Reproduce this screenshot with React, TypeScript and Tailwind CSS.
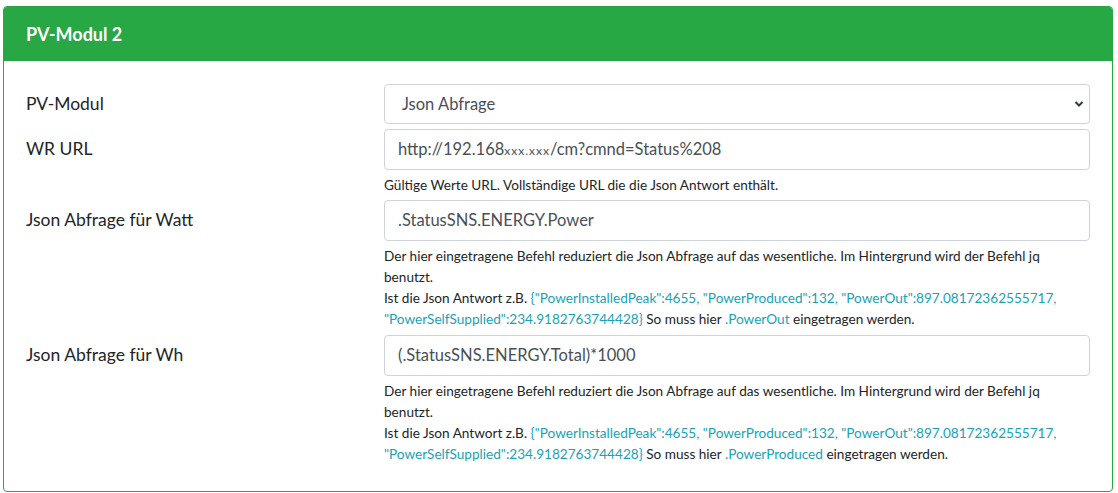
import React from 'react';

const INFO = 'text-[#17a2b8]';

const JsonHelp = ({ field }: { field: string }) => (
  <div className="mt-[5px] text-[13.6px] leading-[21px] text-[#212529]">
    Der hier eingetragene Befehl reduziert die Json Abfrage auf das wesentliche. Im Hintergrund wird der Befehl jq
    benutzt.
    <br />
    Ist die Json Antwort z.B.{' '}
    <span className={INFO}>
      {'{"PowerInstalledPeak":4655, "PowerProduced":132, "PowerOut":897.08172362555717, "PowerSelfSupplied":234.9182763744428}'}
    </span>{' '}
    So muss hier <span className={INFO}>.{field}</span> eingetragen werden.
  </div>
);

const Field = ({ children }: { children: React.ReactNode }) => (
  <div className="h-[41px] border border-[#ced4da] rounded-[4px] bg-white flex items-center px-[13px] text-[16.5px] text-[#495057]">
    {children}
  </div>
);

const Row = ({ label, children }: { label: string; children: React.ReactNode }) => (
  <div className="grid grid-cols-[358px_1fr]">
    <div className="h-[41px] flex items-center text-[17.5px] text-[#212529]">{label}</div>
    <div>{children}</div>
  </div>
);

export default function App() {
  return (
    <div className="pl-[3px] pr-[5px] pt-[6px] bg-white" style={{ fontFamily: 'Lato, "Noto Sans", sans-serif' }}>
      <div className="border border-[#28a745] rounded-[4px] overflow-hidden">
        <div className="h-[54px] bg-[#28a745] px-[22px] flex items-center text-white font-bold text-[18px]">
          PV-Modul 2
        </div>
        <div className="px-[22px] pt-[23px] pb-[26px] flex flex-col gap-[4.5px]">
          <div className="grid grid-cols-[358px_1fr]">
            <div className="h-[40px] flex items-center text-[17.5px] text-[#212529]">PV-Modul</div>
            <div className="h-[40px] border border-[#ced4da] rounded-[4px] bg-white flex items-center justify-between pl-[17px] pr-[5px] text-[16.5px] text-[#495057]">
              <span>Json Abfrage</span>
              <svg width="10" height="8" viewBox="0 0 10 8">
                <path d="M1.5 2 L5 5.5 L8.5 2" fill="none" stroke="#343a40" strokeWidth="2" />
              </svg>
            </div>
          </div>
          <Row label="WR URL">
            <Field>
              <span>
                http://192.168<span className="text-[12px] tracking-[1px]">xxx.xxx</span>/cm?cmnd=Status%208
              </span>
            </Field>
            <div className="mt-[5px] text-[13.6px] leading-[21px] text-[#212529]">
              Gültige Werte URL. Vollständige URL die die Json Antwort enthält.
            </div>
          </Row>
          <Row label="Json Abfrage für Watt">
            <Field>.StatusSNS.ENERGY.Power</Field>
            <JsonHelp field="PowerOut" />
          </Row>
          <Row label="Json Abfrage für Wh">
            <Field>(.StatusSNS.ENERGY.Total)*1000</Field>
            <JsonHelp field="PowerProduced" />
          </Row>
        </div>
      </div>
    </div>
  );
}
